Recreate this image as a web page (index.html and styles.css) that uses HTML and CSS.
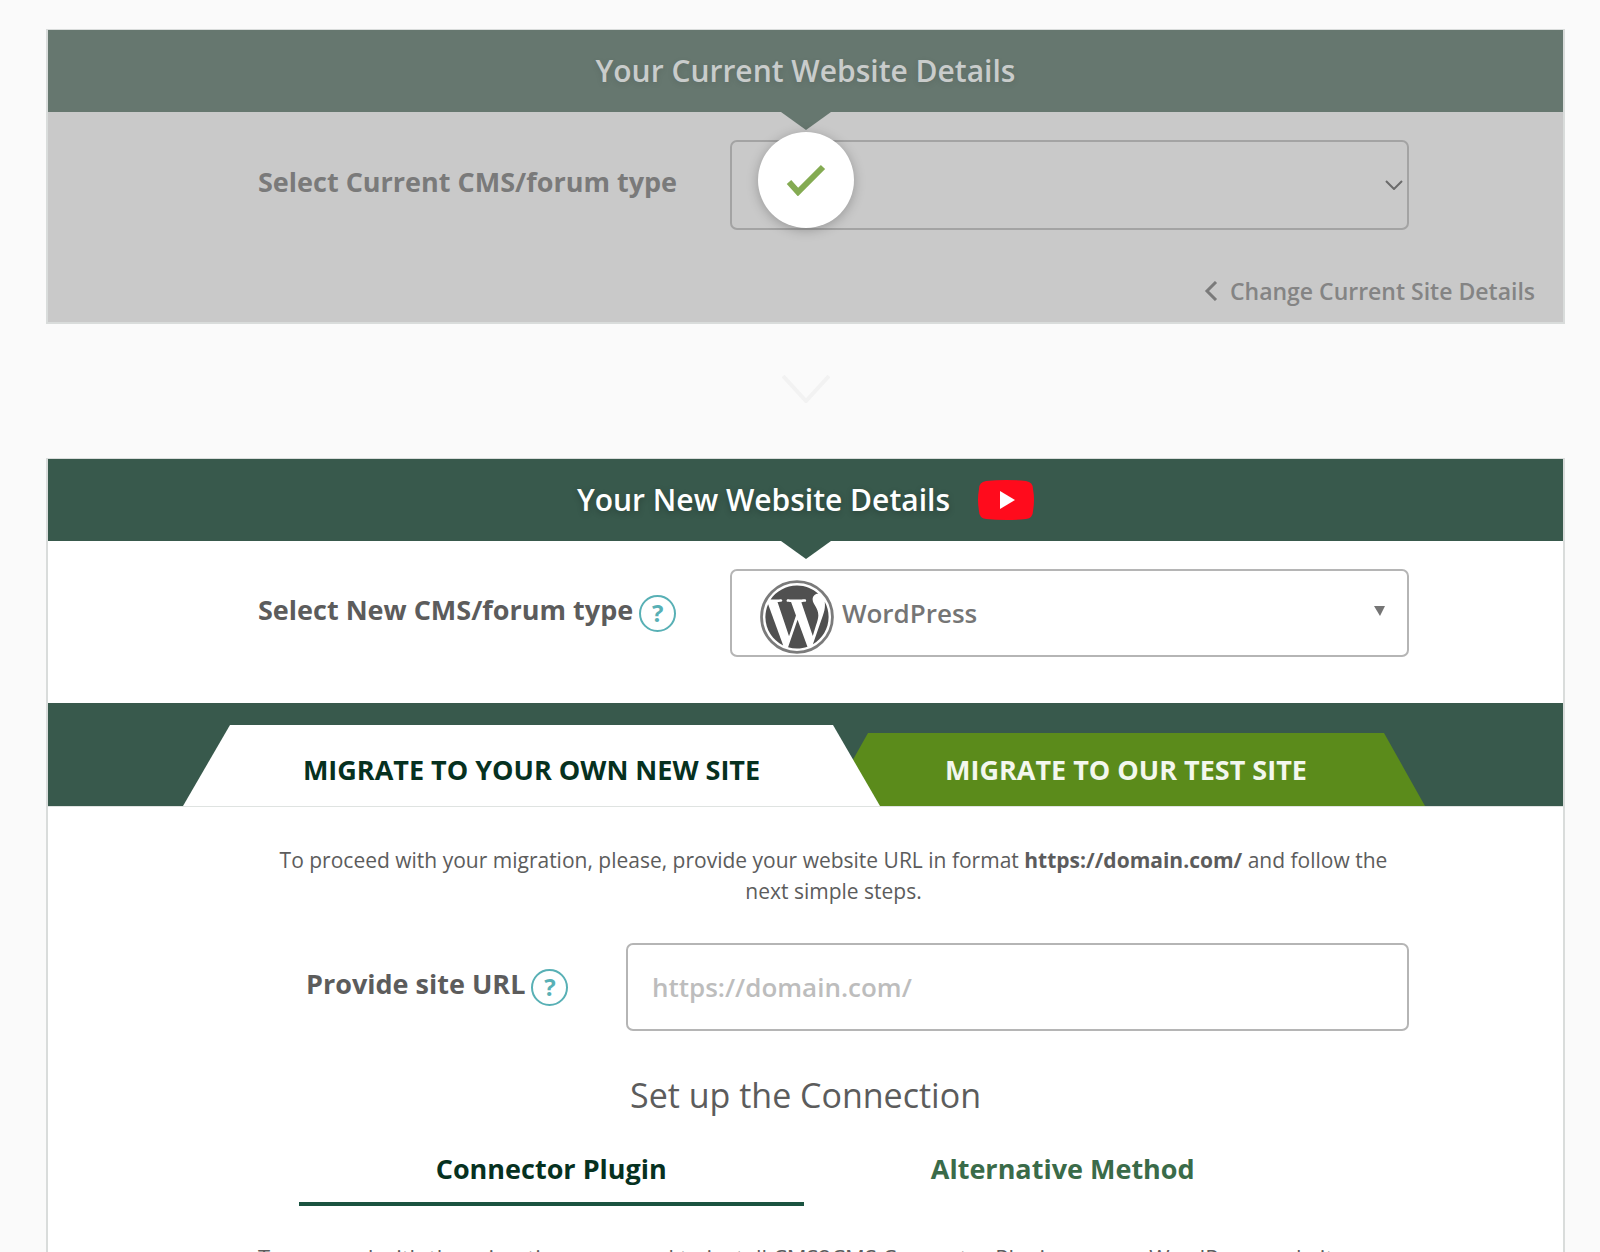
FILE: index.html
```html
<!DOCTYPE html>
<html lang="en">
<head>
    <meta charset="UTF-8">
    <meta name="viewport" content="width=device-width, initial-scale=1.0">
    <title>Website Migration</title>
    <link rel="stylesheet" href="styles.css">
</head>
<body>
    <main class="wizard">
        <section class="panel panel-done">
            <header class="panel-header">
                <h2>Your Current Website Details</h2>
            </header>
            <div class="form-row">
                <label for="currentCms">Select Current CMS/forum type</label>
                <div class="control control-cms">
                    <select id="currentCms" disabled>
                        <option value=""></option>
                    </select>
                    <svg class="caret-open" viewBox="0 0 18 10" aria-hidden="true"><path d="M1 1l8 8 8-8"/></svg>
                </div>
            </div>
            <div class="panel-footer">
                <a class="change-link" href="#current">
                    <svg viewBox="0 0 14 20" aria-hidden="true"><path d="M12 1L3 10l9 9"/></svg>
                    Change Current Site Details
                </a>
            </div>
            <div class="done-badge">
                <svg viewBox="0 0 40 32" aria-hidden="true"><path d="M3 18l9 10L37 3"/></svg>
            </div>
        </section>

        <svg class="step-arrow" viewBox="0 0 48 28" aria-hidden="true"><path d="M1 1l23 25L47 1"/></svg>

        <section class="panel">
            <header class="panel-header">
                <h2>Your New Website Details</h2>
                <a class="video-link" href="#video" aria-label="Watch video">
                    <svg viewBox="0 0 56 40" aria-hidden="true">
                        <path fill="#ff0b1c" d="M8 1Q28-1 48 1Q55 2 55 9Q57 20 55 31Q55 38 48 39Q28 41 8 39Q1 38 1 31Q-1 20 1 9Q1 2 8 1Z"/>
                        <path fill="#fff" d="M22 11l15 9-15 9z"/>
                    </svg>
                </a>
            </header>
            <div class="form-row">
                <label for="newCms">Select New CMS/forum type</label>
                <button class="help" type="button" aria-label="Help">?</button>
                <div class="control control-cms">
                    <select id="newCms" class="with-logo">
                        <option>WordPress</option>
                    </select>
                    <svg class="cms-logo" viewBox="0 0 24 24" aria-hidden="true">
                        <circle cx="12" cy="12" r="11.5" stroke="#7b7b7b" stroke-width="0.9"/>
                        <g fill="#505050" transform="translate(0.6 0.6) scale(0.95)">
                            <path d="M21.469 6.825c.84 1.537 1.318 3.3 1.318 5.175 0 3.979-2.156 7.456-5.363 9.325l3.295-9.527c.615-1.54.82-2.771.82-3.864 0-.405-.026-.78-.07-1.11z"/>
                            <path d="M13.488 6.93c.647-.03 1.232-.105 1.232-.105.582-.075.514-.93-.067-.899 0 0-1.755.135-2.88.135-1.064 0-2.85-.15-2.85-.15-.585-.03-.661.855-.075.885 0 0 .54.061 1.125.09l1.68 4.605-2.37 7.08L5.354 6.9c.649-.03 1.234-.1 1.234-.1.585-.075.516-.93-.065-.896 0 0-1.746.138-2.874.138-.2 0-.438-.008-.69-.015C4.911 3.15 8.235 1.215 12 1.215c2.809 0 5.365 1.072 7.286 2.833-.046-.003-.091-.009-.141-.009-1.06 0-1.812.923-1.812 1.914 0 .89.513 1.643 1.06 2.531.411.72.89 1.643.89 2.977 0 .915-.354 1.994-.821 3.479l-1.075 3.585z"/>
                            <path d="M12 22.784c-1.059 0-2.081-.153-3.048-.437l3.237-9.406 3.315 9.087c.024.053.05.101.078.149-1.12.393-2.325.609-3.582.609z"/>
                            <path d="M1.211 12c0-1.564.336-3.05.935-4.39L7.29 21.709C3.694 19.96 1.212 16.271 1.211 12z"/>
                        </g>
                    </svg>
                    <svg class="caret-solid" viewBox="0 0 11 10" aria-hidden="true"><path d="M0 0h11L6 10z"/></svg>
                </div>
            </div>

            <nav class="site-tabs">
                <button class="site-tab active" type="button">MIGRATE TO YOUR OWN NEW SITE</button>
                <button class="site-tab" type="button">MIGRATE TO OUR TEST SITE</button>
            </nav>

            <div class="site-content">
                <p class="intro">To proceed with your migration, please, provide your website URL in format <strong>https://domain.com/</strong> and follow the next simple steps.</p>
                <div class="form-row url-row">
                    <label for="siteUrl">Provide site URL</label>
                    <button class="help" type="button" aria-label="Help">?</button>
                    <div class="control control-url">
                        <input type="url" id="siteUrl" placeholder="https://domain.com/">
                    </div>
                </div>
                <h3>Set up the Connection</h3>
                <nav class="method-tabs">
                    <button class="method-tab active" type="button">Connector Plugin</button>
                    <button class="method-tab" type="button">Alternative Method</button>
                </nav>
                <p class="method-text">To proceed with the migration, you need to install CMS2CMS Connector Plugin on your WordPress website.</p>
            </div>
        </section>
    </main>
</body>
</html>
```
FILE: styles.css
```css
* {
    box-sizing: border-box;
}
body {
    margin: 0;
    background: #fafafa;
    color: #5c5c5c;
    font-family: "Open Sans", "Noto Sans", sans-serif;
    font-size: 21px;
}
h2, h3, p {
    margin: 0;
}
button {
    padding: 0;
    border: none;
    background: none;
    font-family: inherit;
    cursor: pointer;
}
svg {
    display: block;
    fill: none;
}
.wizard {
    padding: 29px 35px 0 46px;
}
.panel {
    position: relative;
    border: 2px solid #d9dcdb;
    border-top-width: 1px;
    background: #fff;
}
.panel-header {
    position: relative;
    display: flex;
    justify-content: center;
    align-items: center;
    gap: 28px;
    height: 82px;
    background: #38594c;
}
.panel-header::after {
    content: "";
    position: absolute;
    top: 100%;
    left: 50%;
    margin-left: -25px;
    border: 25px solid transparent;
    border-top: 18px solid #38594c;
    border-bottom: none;
}
h2 {
    color: #fff;
    font-size: 30px;
    font-weight: 600;
    line-height: 42px;
    text-shadow: 0 2px 6px rgba(0, 0, 0, 0.25);
}
.video-link svg {
    width: 56px;
    height: 40px;
}
.form-row {
    display: flex;
    align-items: center;
    padding: 28px 154px 46px 210px;
}
label {
    font-size: 27px;
    font-weight: 700;
    line-height: 36px;
    margin-bottom: 6px;
}
.help {
    width: 37px;
    height: 37px;
    margin-left: 6px;
    border: 2px solid #58b0b5;
    border-radius: 50%;
    color: #58b0b5;
    font-size: 24px;
    font-weight: 700;
    line-height: 32px;
}
.control {
    position: relative;
    margin-left: auto;
}
.control-cms {
    width: 59%;
}
.control-url {
    width: 71%;
}
select, input {
    display: block;
    width: 100%;
    height: 88px;
    padding: 0 24px;
    border: 2px solid #b5b5b5;
    border-radius: 7px;
    background: #fff;
    color: #757575;
    font-family: inherit;
    font-size: 26px;
    font-weight: 600;
    appearance: none;
}
input::placeholder {
    color: #bdbdbd;
    opacity: 1;
}
.with-logo {
    padding-left: 110px;
}
.cms-logo {
    position: absolute;
    top: 11px;
    left: 30px;
    width: 74px;
    height: 74px;
}
.caret-solid {
    position: absolute;
    top: 37px;
    right: 24px;
    width: 11px;
    height: 10px;
    fill: #757575;
}
.caret-open {
    position: absolute;
    top: 40px;
    right: 6px;
    width: 18px;
    height: 10px;
    stroke: #6b6b6b;
    stroke-width: 2;
}

/* completed step */
.panel-done {
    background: #c9c9c9;
}
.panel-done .panel-header {
    background: #66776f;
}
.panel-done .panel-header::after {
    border-top-color: #66776f;
}
.panel-done h2 {
    color: #c9cccb;
    text-shadow: 0 2px 6px rgba(0, 0, 0, 0.1);
}
.panel-done label {
    color: #7a7a7a;
}
.panel-done select {
    height: 90px;
    border-color: #a3a3a3;
    background: transparent;
    opacity: 1;
}
.panel-footer {
    display: flex;
    justify-content: flex-end;
    padding: 0 28px 16px;
}
.change-link {
    display: flex;
    align-items: center;
    gap: 12px;
    color: #848484;
    font-size: 23px;
    font-weight: 600;
    line-height: 30px;
    text-decoration: none;
}
.change-link svg {
    width: 14px;
    height: 20px;
    stroke: #7a7a7a;
    stroke-width: 3;
}
.done-badge {
    position: absolute;
    top: 102px;
    left: 50%;
    display: flex;
    justify-content: center;
    align-items: center;
    width: 96px;
    height: 96px;
    margin-left: -48px;
    border-radius: 50%;
    background: #fff;
    box-shadow: 0 2px 12px rgba(0, 0, 0, 0.25);
}
.done-badge svg {
    width: 40px;
    height: 32px;
    stroke: #84ab52;
    stroke-width: 6;
}
.step-arrow {
    width: 48px;
    height: 28px;
    margin: 51px auto 55px;
    stroke: #f2f2f2;
    stroke-width: 4;
}

/* destination tabs */
.site-tabs {
    display: flex;
    align-items: flex-end;
    height: 104px;
    padding: 0 138px 0 135px;
    border-bottom: 1px solid #dfe3e1;
    background: #38594c;
}
.site-tab {
    flex: 598;
    height: 73px;
    margin-left: -53px;
    background: #5b8b1b;
    clip-path: polygon(41px 0, calc(100% - 41px) 0, 100% 100%, 0 100%);
    color: #f3f7ee;
    font-size: 27px;
    font-weight: 700;
}
.site-tab.active {
    z-index: 1;
    flex: 697;
    height: 81px;
    margin-left: 0;
    padding-top: 8px;
    background: #fff;
    clip-path: polygon(47px 0, calc(100% - 47px) 0, 100% 100%, 0 100%);
    color: #06311f;
}
.intro {
    padding: 38px 154px 0 210px;
    line-height: 31px;
    text-align: center;
}
.url-row {
    padding: 36px 154px 0 258px;
}
h3 {
    margin-top: 40px;
    font-size: 34px;
    font-weight: 400;
    line-height: 48px;
    text-align: center;
}
.method-tabs {
    display: flex;
    gap: 7px;
    padding: 24px 248px 0 251px;
}
.method-tab {
    flex: 1;
    height: 63px;
    padding-bottom: 9px;
    border-bottom: 4px solid transparent;
    color: #3a6b49;
    font-size: 27px;
    font-weight: 700;
}
.method-tab.active {
    border-bottom-color: #1a5340;
    color: #06311f;
}
.method-text {
    padding: 36px 154px 40px 210px;
    font-size: 22px;
    line-height: 31px;
}
```
